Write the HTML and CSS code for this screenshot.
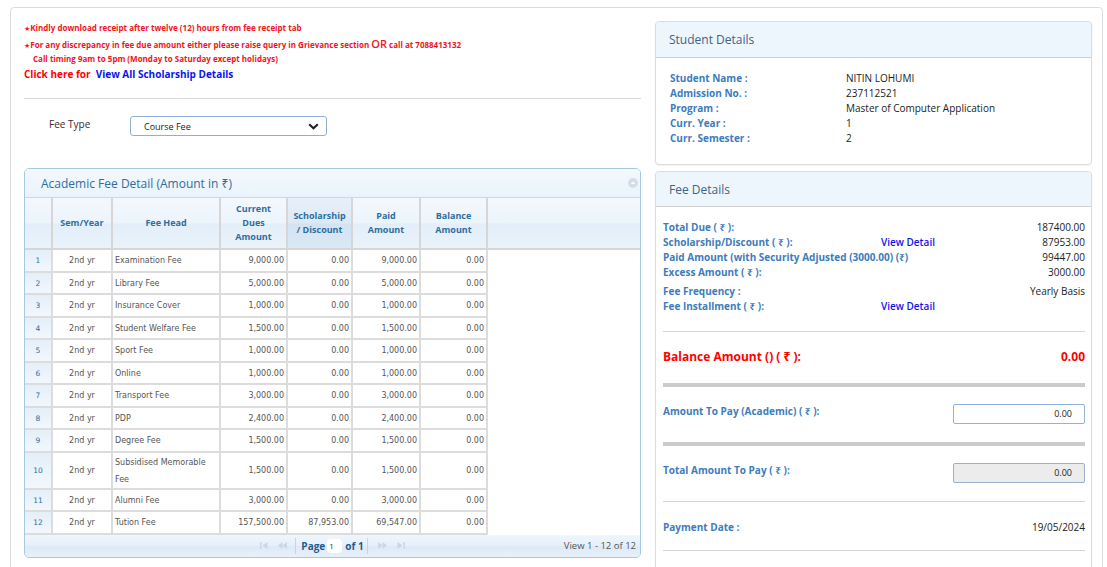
FILE: index.html
```html
<!DOCTYPE html>
<html>
<head>
<meta charset="utf-8">
<title>Fee Details</title>
<link rel="stylesheet" href="styles.css">
</head>
<body>
<div class="page">
  <div class="left">
    <div class="notices">
      <div class="n1"><span class="star">★</span>Kindly download receipt after twelve (12) hours from fee receipt tab</div>
      <div class="n2"><span class="star">★</span>For any discrepancy in fee due amount either please raise query in Grievance section <span class="or">OR</span> call at 7088413132</div>
      <div class="n3">Call timing 9am to 5pm (Monday to Saturday except holidays)</div>
      <div class="click">Click here for &nbsp;<a class="link" href="#">View All Scholarship Details</a></div>
    </div>
    <hr class="sep">
    <div class="feetype">
      <span class="ft-label">Fee Type</span>
      <div class="select"><span>Course Fee</span>
        <svg class="chev" width="11" height="7" viewBox="0 0 11 7"><path d="M1.2 1.2 L5.5 5.3 L9.8 1.2" fill="none" stroke="#1e1e1e" stroke-width="2"/></svg>
      </div>
    </div>

    <div class="grid">
      <div class="grid-title">Academic Fee Detail (Amount in ₹)
        <span class="collapse"><svg width="10" height="10" viewBox="0 0 10 10"><circle cx="5" cy="5" r="5" fill="#d5dde6"/><path d="M2.8 6 L5 3.6 L7.2 6Z" fill="#fff"/></svg></span>
      </div>
      <div class="grid-head">
        <table class="gtable">
          <colgroup><col class="c-rn"><col class="c-sem"><col class="c-head"><col class="c-cur"><col class="c-sch"><col class="c-paid"><col class="c-bal"></colgroup>
          <thead>
            <tr>
              <th></th>
              <th>Sem/Year</th>
              <th>Fee Head</th>
              <th>Current<br>Dues<br>Amount</th>
              <th class="hover">Scholarship<br>/ Discount</th>
              <th>Paid<br>Amount</th>
              <th>Balance<br>Amount</th>
            </tr>
          </thead>
        </table>
      </div>
      <div class="grid-body">
        <table class="gtable">
          <colgroup><col class="c-rn"><col class="c-sem"><col class="c-head"><col class="c-cur"><col class="c-sch"><col class="c-paid"><col class="c-bal"></colgroup>
          <tbody>
            <tr><td class="rn">1</td><td class="sem">2nd yr</td><td class="fh">Examination Fee</td><td class="num">9,000.00</td><td class="num">0.00</td><td class="num">9,000.00</td><td class="num">0.00</td></tr>
            <tr><td class="rn">2</td><td class="sem">2nd yr</td><td class="fh">Library Fee</td><td class="num">5,000.00</td><td class="num">0.00</td><td class="num">5,000.00</td><td class="num">0.00</td></tr>
            <tr><td class="rn">3</td><td class="sem">2nd yr</td><td class="fh">Insurance Cover</td><td class="num">1,000.00</td><td class="num">0.00</td><td class="num">1,000.00</td><td class="num">0.00</td></tr>
            <tr><td class="rn">4</td><td class="sem">2nd yr</td><td class="fh">Student Welfare Fee</td><td class="num">1,500.00</td><td class="num">0.00</td><td class="num">1,500.00</td><td class="num">0.00</td></tr>
            <tr><td class="rn">5</td><td class="sem">2nd yr</td><td class="fh">Sport Fee</td><td class="num">1,000.00</td><td class="num">0.00</td><td class="num">1,000.00</td><td class="num">0.00</td></tr>
            <tr><td class="rn">6</td><td class="sem">2nd yr</td><td class="fh">Online</td><td class="num">1,000.00</td><td class="num">0.00</td><td class="num">1,000.00</td><td class="num">0.00</td></tr>
            <tr><td class="rn">7</td><td class="sem">2nd yr</td><td class="fh">Transport Fee</td><td class="num">3,000.00</td><td class="num">0.00</td><td class="num">3,000.00</td><td class="num">0.00</td></tr>
            <tr><td class="rn">8</td><td class="sem">2nd yr</td><td class="fh">PDP</td><td class="num">2,400.00</td><td class="num">0.00</td><td class="num">2,400.00</td><td class="num">0.00</td></tr>
            <tr><td class="rn">9</td><td class="sem">2nd yr</td><td class="fh">Degree Fee</td><td class="num">1,500.00</td><td class="num">0.00</td><td class="num">1,500.00</td><td class="num">0.00</td></tr>
            <tr><td class="rn">10</td><td class="sem">2nd yr</td><td class="fh">Subsidised Memorable Fee</td><td class="num">1,500.00</td><td class="num">0.00</td><td class="num">1,500.00</td><td class="num">0.00</td></tr>
            <tr><td class="rn">11</td><td class="sem">2nd yr</td><td class="fh">Alumni Fee</td><td class="num">3,000.00</td><td class="num">0.00</td><td class="num">3,000.00</td><td class="num">0.00</td></tr>
            <tr><td class="rn">12</td><td class="sem">2nd yr</td><td class="fh">Tution Fee</td><td class="num">157,500.00</td><td class="num">87,953.00</td><td class="num">69,547.00</td><td class="num">0.00</td></tr>
          </tbody>
        </table>
      </div>
      <div class="pager">
        <div></div>
        <div class="pg-center">
          <svg class="pgi" width="8" height="7" viewBox="0 0 8 7"><rect x="0" y="0" width="1.5" height="7"/><path d="M7.5 0 L2.5 3.5 L7.5 7Z"/></svg>
          <svg class="pgi" width="9" height="7" viewBox="0 0 9 7"><path d="M4.5 0 L0 3.5 L4.5 7Z M9 0 L4.5 3.5 L9 7Z"/></svg>
          <span class="pg-sep"></span>
          <span class="pg-txt">Page</span>
          <span class="pg-input">1</span>
          <span class="pg-txt">of 1</span>
          <span class="pg-sep"></span>
          <svg class="pgi" width="9" height="7" viewBox="0 0 9 7"><path d="M0 0 L4.5 3.5 L0 7Z M4.5 0 L9 3.5 L4.5 7Z"/></svg>
          <svg class="pgi" width="8" height="7" viewBox="0 0 8 7"><path d="M0.5 0 L5.5 3.5 L0.5 7Z"/><rect x="6.5" y="0" width="1.5" height="7"/></svg>
        </div>
        <div class="pg-right">View 1 - 12 of 12</div>
      </div>
    </div>
  </div>

  <div class="right">
    <div class="panel student">
      <div class="panel-h">Student Details</div>
      <div class="sbody">
        <div class="srow"><span class="lbl">Student Name :</span><span class="val">NITIN LOHUMI</span></div>
        <div class="srow"><span class="lbl">Admission No. :</span><span class="val">237112521</span></div>
        <div class="srow"><span class="lbl">Program :</span><span class="val">Master of Computer Application</span></div>
        <div class="srow"><span class="lbl">Curr. Year :</span><span class="val">1</span></div>
        <div class="srow"><span class="lbl">Curr. Semester :</span><span class="val">2</span></div>
      </div>
    </div>

    <div class="panel fee">
      <div class="panel-h fee-h">Fee Details</div>
      <div class="fbody">
        <div class="frow"><span class="lbl fl">Total Due ( ₹ ):</span><span class="fm"></span><span class="val">187400.00</span></div>
        <div class="frow"><span class="lbl fl">Scholarship/Discount ( ₹ ):</span><a class="fm vlink" href="#">View Detail</a><span class="val">87953.00</span></div>
        <div class="frow"><span class="lbl">Paid Amount (with Security Adjusted (3000.00) (₹)</span><span class="fm"></span><span class="val">99447.00</span></div>
        <div class="frow"><span class="lbl fl">Excess Amount ( ₹ ):</span><span class="fm"></span><span class="val">3000.00</span></div>
        <div class="frow gap"><span class="lbl fl">Fee Frequency :</span><span class="fm"></span><span class="val">Yearly Basis</span></div>
        <div class="frow"><span class="lbl fl">Fee Installment ( ₹ ):</span><a class="fm vlink" href="#">View Detail</a><span class="val"></span></div>

        <hr class="line l1">
        <div class="balance"><span>Balance Amount () ( ₹ ):</span><span>0.00</span></div>
        <div class="bar"></div>
        <div class="payrow"><span class="lbl">Amount To Pay (Academic) ( ₹ ):</span><span class="amt">0.00</span></div>
        <div class="bar b2"></div>
        <div class="payrow"><span class="lbl">Total Amount To Pay ( ₹ ):</span><span class="amt disabled">0.00</span></div>
        <hr class="line l2">
        <div class="daterow"><span class="lbl">Payment Date :</span><span class="val">19/05/2024</span></div>
        <hr class="line l3">
      </div>
    </div>
  </div>
</div>
</body>
</html>
```

FILE: styles.css
```css
* { box-sizing: border-box; }

body {
  margin: 0;
  background: #fff;
  color: #333;
  font-family: "Open Sans", "Noto Sans", "DejaVu Sans", sans-serif;
}

.page {
  margin: 7px 0 0 10px;
  width: 1093px;
  min-height: 620px;
  border: 1px solid #dcdcdc;
  border-radius: 4px;
  display: flex;
  gap: 14px;
  padding: 13px 10px 0 13px;
}

.left { width: 617px; flex: none; }
.right { width: 437px; flex: none; display: flex; flex-direction: column; gap: 6px; }

/* notices */
.notices { color: #f0141e; font-weight: 700; font-size: 8px; }
.notices > div { overflow: visible; white-space: nowrap; }
.star { font-family: "DejaVu Sans", sans-serif; font-size: 7px; line-height: 0; }
.or { font-size: 11px; font-weight: 600; line-height: 0; }
.n1 { height: 16px; line-height: 14px; }
.n2 { height: 15px; line-height: 16px; }
.n3 { height: 14px; line-height: 14px; padding-left: 9px; }
.click { height: 16px; font-size: 10px; line-height: 16px; color: #f00; }
.link { color: #0a14f0; text-decoration: none; }

hr.sep { border: 0; border-top: 1px solid #dcd6d9; margin: 16px 0 0; }

.feetype { display: flex; align-items: flex-start; margin-top: 17px; }
.ft-label { width: 106px; padding-left: 25px; padding-top: 1px; font-size: 10px; line-height: 14px; color: #3a2a2a; }
.select {
  width: 197px; height: 20px;
  border: 1px solid #8fb0d6; border-radius: 3px;
  display: flex; align-items: center; justify-content: space-between;
  padding: 0 7px 0 13px;
  font-size: 9px; color: #222;
}

/* grid */
.grid {
  margin-top: 32px;
  border: 1px solid #a6c9e2;
  border-radius: 5px;
  overflow: hidden;
  background: #fff;
}
.grid-title {
  position: relative;
  height: 29px;
  display: flex; align-items: center;
  padding-left: 16px;
  font-size: 12px; color: #2e6e9e;
  background: linear-gradient(#f3f8fd, #eaf3fc);
  border-bottom: 1px solid #c9d9e8;
}
.collapse { position: absolute; right: 2px; top: 9px; line-height: 0; }

.gtable { border-collapse: separate; border-spacing: 0; table-layout: fixed; width: 463px; }
.c-rn { width: 28px; }
.c-sem { width: 60px; }
.c-head { width: 108px; }
.c-cur { width: 67px; }
.c-sch { width: 65px; }
.c-paid { width: 68px; }
.c-bal { width: 67px; }

.grid-head {
  background: linear-gradient(#f3f8fd 0%, #ecf4fc 50%, #e2eef9 52%, #eaf3fb 100%);
  border-bottom: 2px solid #d6d6d6;
}
.grid-head th {
  height: 50px;
  padding: 0 2px;
  border-right: 2px solid #d6d6d6;
  font-size: 9px; font-weight: 700; line-height: 14px;
  color: #2e6e9e; text-align: center; vertical-align: middle;
}
.grid-head th.hover { background: linear-gradient(#e6f0fa 0%, #dde9f5 50%, #d3e3f2 52%, #dbe8f5 100%); }

.grid-body td {
  height: 22.5px;
  padding: 1px 2px 0;
  border-right: 2px solid #dcdcdc;
  border-bottom: 2px solid #dcdcdc;
  font-family: "DejaVu Sans", Verdana, sans-serif;
  font-size: 8px; line-height: 17px; color: #555;
  vertical-align: middle;
  white-space: normal;
}
.grid-body td.rn {
  text-align: center; color: #2e6e9e; font-size: 7.5px;
  background: linear-gradient(#e4eff9, #f2f7fc);
}
.grid-body td.sem { text-align: center; }
.grid-body td.fh { padding-left: 2px; }
.grid-body td.num { text-align: right; padding-right: 2px; }

.pager {
  height: 22px;
  display: grid; grid-template-columns: 1fr auto 1fr; align-items: center;
  background: linear-gradient(#eef5fc 0%, #e6f0fa 50%, #dde9f6 52%, #e8f1fa 100%);
}
.pg-center { display: flex; align-items: center; gap: 0; }
.pgi { fill: #c9d7e6; margin: 0 5px; }
.pg-sep { width: 1px; height: 16px; background: #c5d5e5; margin: 0 5px 0 3px; }
.pg-txt { font-size: 10px; font-weight: 700; color: #1f5a8f; }
.pg-input {
  display: inline-block; width: 15px; height: 14px; margin: 0 3px 0 2px;
  background: #fff; border-radius: 4px;
  font-size: 8px; line-height: 14px; padding-left: 2px; color: #333;
}
.pg-right { text-align: right; padding-right: 4px; font-size: 9.5px; color: #555; }

/* right panels */
.panel {
  border: 1px solid #dcdcdc; border-radius: 4px; background: #fff;
  box-shadow: 0 1px 2px rgba(0,0,0,0.06);
}
.student { height: 144px; }
.fee { flex: 1; }
.panel-h {
  height: 36px;
  background: #eef6fd;
  border-bottom: 1px solid #cfcfcf;
  display: flex; align-items: center;
  padding-left: 13px;
  font-size: 12px; color: #3b6587;
  border-radius: 4px 4px 0 0;
}
.fee-h { height: 35px; }

.lbl { font-size: 10px; font-weight: 700; color: #3d7cbc; }
.val { font-size: 10px; color: #222; }

.sbody { padding: 13px 14px 0; }
.srow { display: flex; line-height: 15px; }
.srow .lbl { width: 176px; }

.fbody { padding: 13px 6px 0 7px; }
.frow { display: flex; line-height: 15px; }
.frow.gap { margin-top: 4px; }
.frow .fl { width: 218px; flex: none; }
.frow .fm { flex: 1; }
.frow .val { text-align: right; }
.vlink { font-size: 10px; color: #1212e8; text-decoration: none; font-weight: 600; }

hr.line { border: 0; border-top: 1px solid #d9d4d7; margin: 0; }
hr.l1 { margin-top: 17px; }
hr.l2 { margin-top: 18px; }
hr.l3 { margin-top: 16px; }

.balance {
  margin-top: 16px;
  display: flex; justify-content: space-between;
  font-size: 12px; font-weight: 700; line-height: 18px; color: #f00;
}
.bar { height: 4px; background: #cbcbcb; margin-top: 17px; }
.bar.b2 { margin-top: 18px; }

.payrow { margin-top: 17px; display: flex; justify-content: space-between; align-items: flex-start; }
.payrow .lbl { line-height: 14px; }
.amt {
  width: 132px; height: 20px;
  border: 1px solid #8fb3da; border-radius: 2px;
  font-size: 9px; line-height: 18px; text-align: right;
  padding-right: 12px; color: #222; background: #fff;
}
.amt.disabled { background: #ececec; border-color: #98b2cc; }

.daterow { margin-top: 18px; display: flex; justify-content: space-between; line-height: 14px; }
```
